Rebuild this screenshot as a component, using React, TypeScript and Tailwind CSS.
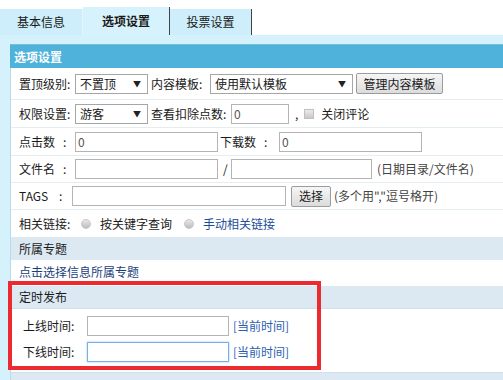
const font = { fontFamily: '"Noto Sans CJK SC", "Liberation Sans", sans-serif' };

function Select({ value, w }: { value: string; w: string }) {
  return (
    <div className={`flex h-[20px] items-center justify-between border border-[#a6a6a6] bg-white pl-[4px] pr-[6px] ${w}`}>
      <span>{value}</span>
      <span className="text-[8px] text-[#222]">▼</span>
    </div>
  );
}

function Input({ w, value, focus }: { w: string; value?: string; focus?: boolean }) {
  return (
    <div
      className={`flex h-[20px] items-center bg-white px-[2px] text-[#555] ${w} ${
        focus ? "border border-[#7aaee6] shadow-[0_0_2px_#9cc6f0]" : "border border-[#b4b4b4]"
      }`}
    >
      {value}
    </div>
  );
}

function Btn({ label, w }: { label: string; w: string }) {
  return (
    <div className={`flex h-[21px] items-center justify-center rounded-[2px] border border-[#9c9c9c] bg-gradient-to-b from-[#f6f6f6] to-[#dcdcdc] ${w}`}>
      {label}
    </div>
  );
}

function Row({ children, h = "h-[28px]" }: { children: React.ReactNode; h?: string }) {
  return <div className={`flex items-center border-b border-[#e3edf2] pl-[8px] ${h}`}>{children}</div>;
}

function Radio() {
  return <span className="inline-block h-[10px] w-[10px] rounded-full border border-[#c8c8c8] bg-gradient-to-b from-[#e8e8e8] to-[#bdbdbd]" />;
}

export default function App() {
  return (
    <div className="relative h-[380px] w-[503px] overflow-hidden bg-white text-[12px] text-[#1a1a1a]" style={font}>
      {/* tabs */}
      <div className="flex h-[35px] items-end bg-white">
        <div className="flex h-[26px] w-[83px] items-center justify-center border-r border-[#e4f5fc] bg-[#cdeefa]">基本信息</div>
        <div className="flex h-[28px] w-[87px] items-center justify-center border-r border-[#444] bg-[#d6f2fc] font-bold">选项设置</div>
        <div className="flex h-[26px] w-[82px] items-center justify-center border-r border-[#444] bg-[#cdeefa]">投票设置</div>
      </div>

      <div className="flex bg-[#d5f1fb]">
        <div className="w-[10px] shrink-0" />
        <div className="flex-1">
          <div className="h-[10px] border-b border-[#6fc0d8]" />
          <div className="flex h-[23px] items-center bg-[#4fb2da] pl-[4px] font-bold text-white">选项设置</div>
          <div className="border-l border-[#b9dbe9] bg-white">
            <Row h="h-[32px]">
              <span className="w-[56px]">置顶级别:</span>
              <Select value="不置顶" w="w-[73px]" />
              <span className="ml-[3px] w-[59px]">内容模板:</span>
              <Select value="使用默认模板" w="w-[143px]" />
              <span className="ml-[3px]">
                <Btn label="管理内容模板" w="w-[87px]" />
              </span>
            </Row>
            <Row>
              <span className="w-[56px]">权限设置:</span>
              <Select value="游客" w="w-[73px]" />
              <span className="ml-[3px] w-[80px]">查看扣除点数:</span>
              <Input w="w-[58px]" value="0" />
              <span className="ml-[6px]">,</span>
              <span className="ml-[6px] inline-block h-[10px] w-[10px] border border-[#c0c0c0] bg-gradient-to-b from-[#ececec] to-[#c8c8c8]" />
              <span className="ml-[7px]">关闭评论</span>
            </Row>
            <Row>
              <span className="w-[56px]">点击数&nbsp;&nbsp;&nbsp;:</span>
              <Input w="w-[143px]" value="0" />
              <span className="ml-[2px] w-[59px]">下载数&nbsp;&nbsp;&nbsp;:</span>
              <Input w="w-[143px]" value="0" />
            </Row>
            <Row h="h-[27px]">
              <span className="w-[56px]">文件名&nbsp;&nbsp;&nbsp;:</span>
              <Input w="w-[143px]" />
              <span className="ml-[5px] w-[8px]">/</span>
              <Input w="w-[141px]" />
              <span className="ml-[5px] text-[#444]">(日期目录/文件名)</span>
            </Row>
            <Row h="h-[27px]">
              <span className="w-[53px]">TAGS&nbsp;&nbsp;&nbsp;&nbsp;:</span>
              <Input w="w-[214px]" />
              <span className="ml-[5px]">
                <Btn label="选择" w="w-[40px]" />
              </span>
              <span className="ml-[3px] text-[#444]">(多个用&quot;,&quot;逗号格开)</span>
            </Row>
            <div className="flex h-[27px] items-center pl-[8px]">
              <span className="w-[62px]">相关链接:</span>
              <Radio />
              <span className="ml-[9px]">按关键字查询</span>
              <span className="ml-[12px]">
                <Radio />
              </span>
              <span className="ml-[9px] text-[#1d4c9a]">手动相关链接</span>
            </div>
            <div className="flex h-[23px] items-center bg-[#dce9f3] pl-[8px]">所属专题</div>
            <div className="flex h-[24px] items-center pl-[8px] text-[#1b3f7c]">点击选择信息所属专题</div>
            <div className="h-[2px]" />
            <div className="flex h-[23px] items-center border-b border-[#cfe0ec] bg-[#dce9f3] pl-[8px]">定时发布</div>
            <div className="flex h-[29px] items-center pl-[12px] pt-[4px]">
              <span className="w-[64px]">上线时间:</span>
              <Input w="w-[142px]" />
              <span className="ml-[4px] text-[#2d5fb0]">[当前时间]</span>
            </div>
            <div className="flex h-[28px] items-center pl-[12px]">
              <span className="w-[64px]">下线时间:</span>
              <Input w="w-[142px]" focus />
              <span className="ml-[4px] text-[#2d5fb0]">[当前时间]</span>
            </div>
            <div className="h-[6px]" />
            <div className="h-[20px] border-t border-[#cfe0ec] bg-[#dce9f3]" />
          </div>
        </div>
      </div>

      {/* annotation box */}
      <div className="pointer-events-none absolute left-[8px] top-[281px] h-[89px] w-[313px] border-[4px] border-[#ec2b30]" />
    </div>
  );
}
